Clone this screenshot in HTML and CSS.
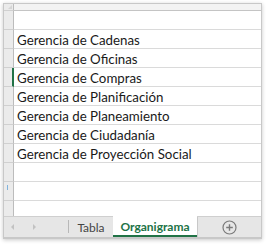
FILE: index.html
```
<!DOCTYPE html>
<html>
<head>
<meta charset="utf-8">
<link rel="stylesheet" href="styles.css">
</head>
<body>
<div class="window">
  <div class="sheet">
    <div class="row head"><div class="rh corner"><span class="tri"></span></div><div class="cell"></div></div>
    <div class="row"><div class="rh"></div><div class="cell"></div></div>
    <div class="row"><div class="rh"></div><div class="cell">Gerencia de Cadenas</div></div>
    <div class="row"><div class="rh"></div><div class="cell">Gerencia de Oficinas</div></div>
    <div class="row"><div class="rh active"></div><div class="cell">Gerencia de Compras</div></div>
    <div class="row"><div class="rh"></div><div class="cell">Gerencia de Planificación</div></div>
    <div class="row"><div class="rh"></div><div class="cell">Gerencia de Planeamiento</div></div>
    <div class="row"><div class="rh"></div><div class="cell">Gerencia de Ciudadanía</div></div>
    <div class="row"><div class="rh"></div><div class="cell">Gerencia de Proyección Social</div></div>
    <div class="row"><div class="rh"></div><div class="cell"></div></div>
    <div class="row"><div class="rh"><span class="mark"></span></div><div class="cell"></div></div>
    <div class="row last"><div class="rh"></div><div class="cell"></div></div>
  </div>
  <div class="tabbar">
    <div class="nav">
      <span class="arrow left"></span>
      <span class="arrow right"></span>
    </div>
    <div class="tab">Tabla</div>
    <div class="tab active">Organigrama</div>
    <div class="add">
      <svg width="15" height="15" viewBox="0 0 15 15"><circle cx="7.5" cy="7.5" r="6.5" fill="none" stroke="#7a7a7a" stroke-width="1.2"/><path d="M7.5 4.2v6.6M4.2 7.5h6.6" stroke="#7a7a7a" stroke-width="1.4"/></svg>
    </div>
  </div>
</div>
</body>
</html>
```
FILE: styles.css
```
html, body {
  margin: 0;
  padding: 0;
  background: #ffffff;
}
body {
  width: 268px;
  height: 247px;
  overflow: hidden;
}
.window {
  margin: 3px 0 0 3px;
  width: 259px;
  height: 236px;
  border: 1px solid #c8c8c8;
  box-sizing: border-box;
  box-shadow: 0 1px 4px rgba(0,0,0,0.22);
  background: #fff;
  display: flex;
  flex-direction: column;
  overflow: hidden;
}
.sheet {
  flex: 0 0 212px;
  overflow: hidden;
  display: flex;
  flex-direction: column;
}
.row {
  display: flex;
  flex: 0 0 19px;
  height: 19px;
  box-sizing: border-box;
  border-bottom: 1px solid #dadada;
}
.row.head {
  flex: 0 0 7px;
  height: 7px;
  border-bottom: 1px solid #c4c4c4;
}
.row.head .cell {
  background: #f3f3f3;
}
.row.last {
  border-bottom: none;
}
.rh {
  width: 9px;
  flex: 0 0 9px;
  background: #ebebeb;
  border-right: 1px solid #bcbcbc;
  position: relative;
}
.row .rh {
  margin-bottom: -1px;
  border-bottom: 1px solid #d0d0d0;
}
.rh.active {
  border-right: 2px solid #217346;
  width: 8px;
  flex-basis: 8px;
}
.corner .tri {
  position: absolute;
  right: 1px;
  bottom: 1px;
  width: 0;
  height: 0;
  border-left: 4px solid transparent;
  border-bottom: 4px solid #d6d6d6;
}
.mark {
  position: absolute;
  left: 3px;
  top: 3px;
  width: 1px;
  height: 5px;
  background: #7fb2dd;
}
.cell {
  flex: 1;
  padding-left: 3px;
  padding-top: 1px;
  font-family: Lato, "Open Sans", sans-serif;
  font-size: 13.3px;
  line-height: 18px;
  color: #1a1a1a;
  white-space: nowrap;
  overflow: hidden;
}
.tabbar {
  flex: 1;
  display: flex;
  background: #e6e6e6;
  border-top: 1px solid #cfcfcf;
  border-bottom: 1px solid #c8c8c8;
  font-family: Lato, "Open Sans", sans-serif;
  font-size: 11.5px;
}
.nav {
  width: 65px;
  flex: 0 0 65px;
  display: flex;
  align-items: center;
  gap: 19px;
  padding-left: 7px;
  box-sizing: border-box;
  border-right: 1px solid #b8b8b8;
  margin: 3px 0 4px;
}
.arrow {
  width: 0;
  height: 0;
  border-top: 3px solid transparent;
  border-bottom: 3px solid transparent;
}
.arrow.left {
  border-right: 3px solid #c2c2c2;
}
.arrow.right {
  border-left: 3px solid #c2c2c2;
}
.tab {
  display: flex;
  align-items: center;
  justify-content: center;
  width: 44px;
  color: #444;
  font-size: 12px;
}
.tab.active {
  width: 84px;
  background: #fff;
  color: #217346;
  font-weight: 700;
  margin-top: -1px;
  border-bottom: 2px solid #217346;
  box-sizing: border-box;
  padding-top: 1px;
}
.add {
  flex: 1;
  display: flex;
  align-items: center;
  justify-content: center;
  border-left: 1px solid #c8c8c8;
}
.add svg {
  display: block;
}
```
